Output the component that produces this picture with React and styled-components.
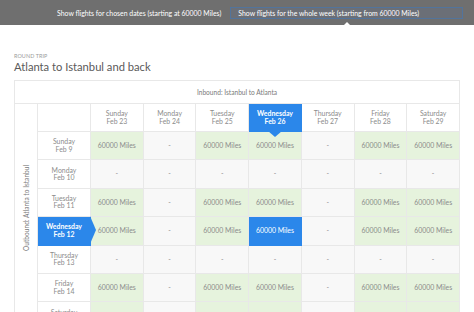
import React from 'react';
import styled, { createGlobalStyle, css } from 'styled-components';

const GlobalStyle = createGlobalStyle`
    html, body {
        margin: 0;
        padding: 0;
        overflow: hidden;
        background: #ffffff;
        font-family: Lato, "Open Sans", sans-serif;
    }
`;

const BLUE = '#2b87ea';
const LINE = '#e8e8e8';

const inboundDays = [
    ['Sunday', 'Feb 23'], ['Monday', 'Feb 24'], ['Tuesday', 'Feb 25'], ['Wednesday', 'Feb 26'],
    ['Thursday', 'Feb 27'], ['Friday', 'Feb 28'], ['Saturday', 'Feb 29'],
];
const outboundDays = [
    ['Sunday', 'Feb 9'], ['Monday', 'Feb 10'], ['Tuesday', 'Feb 11'], ['Wednesday', 'Feb 12'],
    ['Thursday', 'Feb 13'], ['Friday', 'Feb 14'], ['Saturday', 'Feb 15'],
];
const openDays = [0, 2, 3, 5, 6];
const picked = { row: 3, col: 3 };

const TopBar = styled.div`
    height: 25px;
    background: #6f6f6f;
    display: flex;
    align-items: center;
    padding-left: 54px;
    gap: 6px;
`;

const BarButton = styled.div`
    position: relative;
    height: 10px;
    display: flex;
    align-items: center;
    padding: 0 2px;
    color: #ffffff;
    font-size: 6.9px;
    white-space: nowrap;
    border: 1px solid transparent;

    ${(p) => p.active && css`
        width: 222px;
        padding-left: 7px;
        border-color: #52749c;
        background: #6b6f77;

        &::after {
            content: '';
            position: absolute;
            left: 50%;
            top: calc(100% + 4px);
            margin-left: -5px;
            border-left: 5px solid transparent;
            border-right: 5px solid transparent;
            border-bottom: 5px solid #ffffff;
        }
    `}
`;

const Main = styled.div`
    padding: 27px 14px 0 14px;
`;

const Kicker = styled.div`
    font-size: 5.4px;
    line-height: 8px;
    color: #9a9a9a;
    text-transform: uppercase;
    letter-spacing: 0.1px;
`;

const Title = styled.h1`
    margin: 0 0 6px 0;
    font-size: 11.2px;
    line-height: 14px;
    font-weight: 400;
    color: #5a5a5a;
`;

const Table = styled.div`
    width: 446px;
    border-top: 1px solid ${LINE};
    border-left: 1px solid ${LINE};
    box-sizing: border-box;
`;

const InboundRow = styled.div`
    height: 22px;
    display: flex;
    align-items: center;
    justify-content: center;
    font-size: 6.6px;
    color: #7a7a7a;
    border-right: 1px solid ${LINE};
    border-bottom: 1px solid ${LINE};
`;

const Grid = styled.div`
    display: grid;
    grid-template-columns: 23px 53px repeat(7, 1fr);
    grid-template-rows: 28px repeat(7, 28.4px);
`;

const OutboundCell = styled.div`
    grid-column: 1;
    grid-row: 1 / span 8;
    display: flex;
    align-items: center;
    justify-content: center;
    border-right: 1px solid ${LINE};
    background: #ffffff;
`;

const OutboundLabel = styled.span`
    writing-mode: vertical-rl;
    transform: rotate(180deg);
    font-size: 6.6px;
    color: #7a7a7a;
    white-space: nowrap;
    margin-top: -18px;
`;

const Cell = styled.div`
    position: relative;
    display: flex;
    flex-direction: column;
    align-items: center;
    justify-content: center;
    text-align: center;
    font-size: 6.9px;
    line-height: 7.4px;
    color: #8c8c8c;
    border-right: 1px solid ${LINE};
    border-bottom: 1px solid ${LINE};
    background: ${(p) => (p.tone === 'open' ? '#e6f3dd' : p.tone === 'none' ? '#f8f8f8' : '#ffffff')};

    ${(p) => p.selected && css`
        background: ${BLUE};
        color: #ffffff;
        font-weight: 700;
        z-index: 2;
        border-color: ${BLUE};
    `}

    ${(p) => p.selected && p.kind === 'price' && css`
        font-weight: 400;
    `}

    ${(p) => p.selected && p.kind === 'col' && css`
        &::after {
            content: '';
            position: absolute;
            left: 50%;
            top: 100%;
            margin-left: -7px;
            border-left: 7px solid transparent;
            border-right: 7px solid transparent;
            border-top: 6px solid ${BLUE};
        }
    `}

    ${(p) => p.selected && p.kind === 'row' && css`
        &::after {
            content: '';
            position: absolute;
            left: 100%;
            top: -1px;
            border-top: 14.7px solid transparent;
            border-bottom: 14.7px solid transparent;
            border-left: 6px solid ${BLUE};
        }
    `}
`;

const DayLabel = ({ day }) => (
    <>
        <span>{day[0]}</span>
        <span>{day[1]}</span>
    </>
);

export default function App() {
    return (
        <>
            <GlobalStyle />
            <TopBar>
                <BarButton>Show flights for chosen dates (starting at 60000 Miles)</BarButton>
                <BarButton active>Show flights for the whole week (starting from 60000 Miles)</BarButton>
            </TopBar>
            <Main>
                <Kicker>Round trip</Kicker>
                <Title>Atlanta to Istanbul and back</Title>
                <Table>
                    <InboundRow>Inbound: Istanbul to Atlanta</InboundRow>
                    <Grid>
                        <OutboundCell>
                            <OutboundLabel>Outbound: Atlanta to Istanbul</OutboundLabel>
                        </OutboundCell>
                        <Cell />
                        {inboundDays.map((day, c) => (
                            <Cell key={day[1]} kind="col" selected={c === picked.col}>
                                <DayLabel day={day} />
                            </Cell>
                        ))}
                        {outboundDays.map((day, r) => (
                            <React.Fragment key={day[1]}>
                                <Cell kind="row" selected={r === picked.row}>
                                    <DayLabel day={day} />
                                </Cell>
                                {inboundDays.map((col, c) => {
                                    const open = openDays.includes(r) && openDays.includes(c);
                                    return (
                                        <Cell
                                            key={col[1]}
                                            kind="price"
                                            tone={open ? 'open' : 'none'}
                                            selected={r === picked.row && c === picked.col}
                                        >
                                            {open ? '60000 Miles' : '-'}
                                        </Cell>
                                    );
                                })}
                            </React.Fragment>
                        ))}
                    </Grid>
                </Table>
            </Main>
        </>
    );
}
